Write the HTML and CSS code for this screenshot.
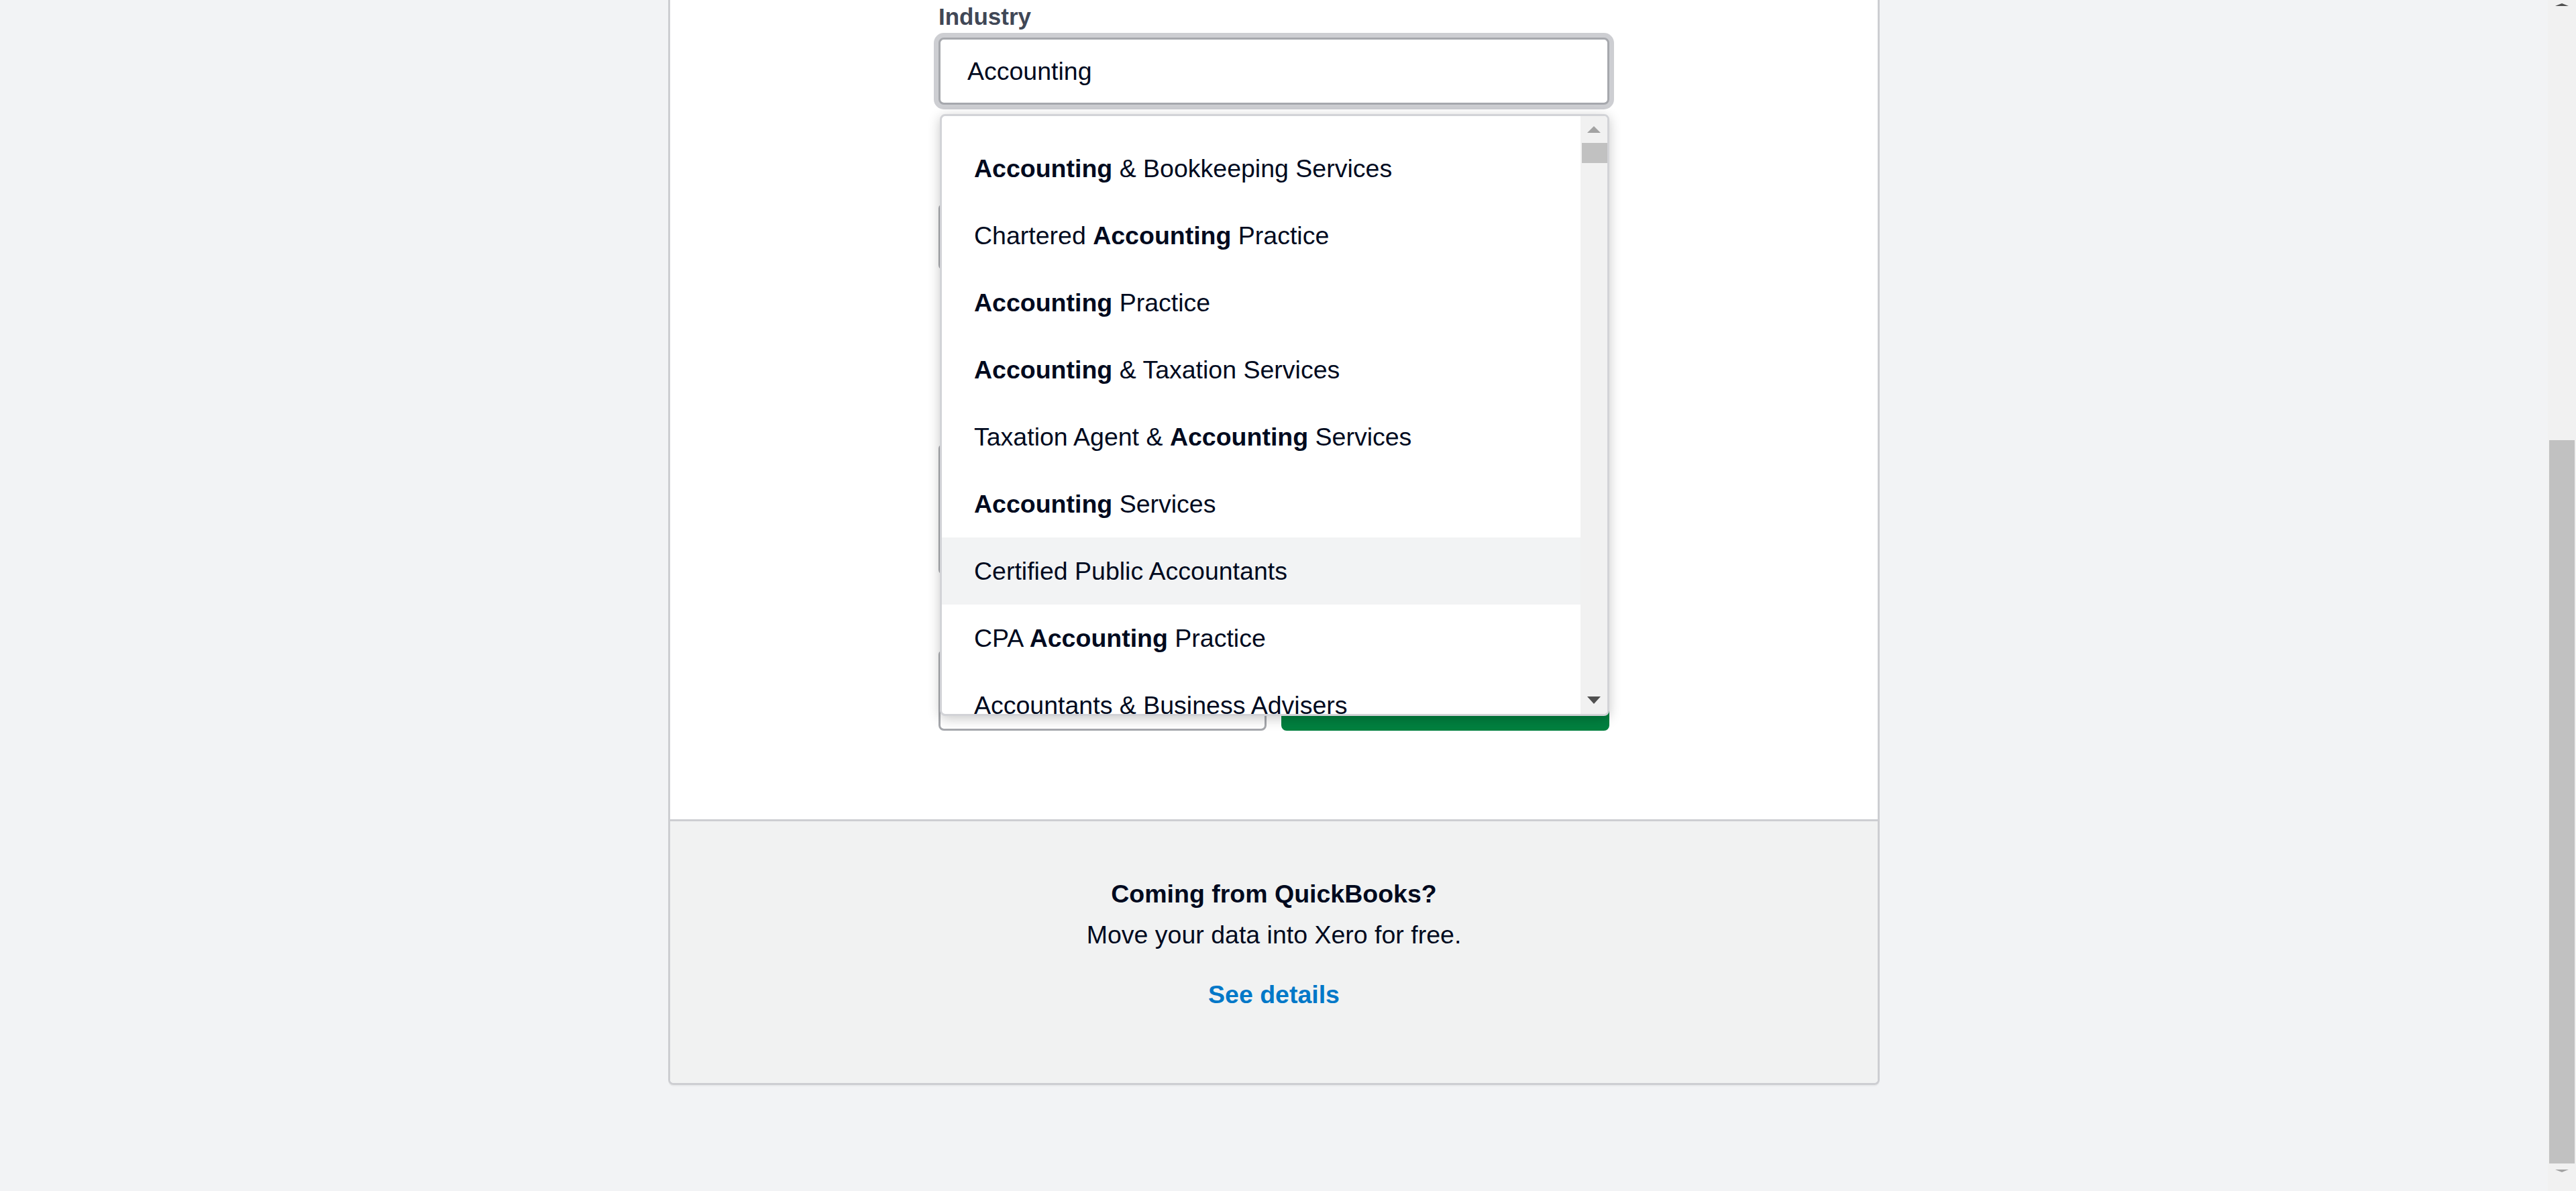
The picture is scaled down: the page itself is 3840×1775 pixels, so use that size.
FILE: index.html
```html
<!DOCTYPE html>
<html lang="en">
<head>
<meta charset="utf-8">
<title>Add organisation</title>
<link rel="stylesheet" href="styles.css">
</head>
<body>
<div class="screen">
  <main class="page">
    <section class="card">
      <div class="card-body">
        <form class="form">
          <div class="field">
            <label class="label" for="industry">Industry</label>
            <div class="combo">
              <input id="industry" class="input input-focus" type="text" value="Accounting">
              <div class="menu">
                <ul class="options">
                  <li class="option"><b>Accounting</b> &amp; Bookkeeping Services</li>
                  <li class="option">Chartered <b>Accounting</b> Practice</li>
                  <li class="option"><b>Accounting</b> Practice</li>
                  <li class="option"><b>Accounting</b> &amp; Taxation Services</li>
                  <li class="option">Taxation Agent &amp; <b>Accounting</b> Services</li>
                  <li class="option"><b>Accounting</b> Services</li>
                  <li class="option option-active">Certified Public Accountants</li>
                  <li class="option">CPA <b>Accounting</b> Practice</li>
                  <li class="option">Accountants &amp; Business Advisers</li>
                </ul>
                <div class="menu-scroll">
                  <span class="arrow-up"></span>
                  <span class="menu-thumb"></span>
                  <span class="menu-scroll-fill"></span>
                  <span class="arrow-down"></span>
                </div>
              </div>
            </div>
          </div>
          <div class="field field-country">
            <span class="label-spacer"></span>
            <div class="input"></div>
          </div>
          <div class="field field-tall">
            <span class="label-spacer"></span>
            <div class="input input-tall"></div>
          </div>
          <div class="actions">
            <button type="button" class="btn btn-secondary" aria-label="Cancel"></button>
            <button type="button" class="btn btn-primary" aria-label="Continue"></button>
          </div>
        </form>
      </div>
      <div class="card-footer">
        <p class="footer-title">Coming from QuickBooks?</p>
        <p class="footer-text">Move your data into Xero for free.</p>
        <a class="footer-link" href="#">See details</a>
      </div>
    </section>
  </main>
  <div class="vscroll">
    <span class="vs-arrow-up"></span>
    <span class="vs-track"></span>
    <span class="vs-thumb"></span>
    <span class="vs-arrow-down"></span>
  </div>
</div>
</body>
</html>
```

FILE: styles.css
```css
* { box-sizing: border-box; }

html, body {
  margin: 0;
  padding: 0;
  height: 100%;
  overflow: hidden;
}

body {
  background: #f2f3f5;
  font-family: "Liberation Sans", Arial, sans-serif;
  color: #000a1e;
}

.screen {
  display: flex;
  height: 1775px;
  width: 3840px;
}

.page {
  flex: 1;
  display: flex;
  justify-content: center;
  align-items: flex-start;
}

.card {
  width: 1806px;
  background: #ffffff;
  border: 3px solid #cdced2;
  border-top: none;
  border-radius: 0 0 8px 8px;
  overflow: hidden;
  box-shadow: 0 2px 0 rgba(0, 0, 0, 0.04);
}

.card-body {
  height: 1221px;
  padding-top: 5px;
}

.form {
  width: 1000px;
  margin: 0 auto;
}

.field {
  display: flex;
  flex-direction: column;
}

.label {
  font-size: 35px;
  line-height: 40px;
  font-weight: 700;
  color: #404756;
  margin-bottom: 11px;
}

.label-spacer {
  display: block;
  height: 40px;
  margin-bottom: 11px;
}

.combo {
  position: relative;
}

.input {
  display: block;
  width: 1000px;
  height: 100px;
  border: 3px solid #a6a8ad;
  border-radius: 8px;
  background: #ffffff;
  font-family: "Liberation Sans", Arial, sans-serif;
  font-size: 37.5px;
  color: #000a1e;
  padding: 0 40px;
  margin: 0;
  outline: none;
}

.input-focus {
  box-shadow: 0 0 0 7px #cdced2;
}

.input-tall {
  height: 196px;
}

.field-country {
  margin-top: 96px;
}

.field-tall {
  margin-top: 207px;
}

.menu {
  position: absolute;
  top: 114px;
  left: 2px;
  right: 0;
  height: 897px;
  display: flex;
  background: #ffffff;
  border: 3px solid #d2d3d7;
  border-radius: 8px;
  box-shadow: 0 4px 18px rgba(0, 0, 0, 0.22);
  overflow: hidden;
  z-index: 5;
}

.options {
  flex: 1;
  list-style: none;
  margin: 0;
  padding: 28px 0 0;
  overflow: hidden;
}

.option {
  height: 100px;
  display: flex;
  align-items: center;
  padding-left: 48px;
  font-size: 37.5px;
  color: #000a1e;
  white-space: pre;
}

.option b {
  font-weight: 700;
}

.option-active {
  background: #f2f3f4;
}

.menu-scroll {
  width: 40px;
  background: #f1f1f1;
  display: flex;
  flex-direction: column;
  align-items: center;
  padding: 15px 0;
}

.arrow-up {
  width: 0;
  height: 0;
  border-left: 10px solid transparent;
  border-right: 10px solid transparent;
  border-bottom: 10px solid #a3a3a3;
}

.arrow-down {
  width: 0;
  height: 0;
  border-left: 10px solid transparent;
  border-right: 10px solid transparent;
  border-top: 11px solid #505050;
}

.menu-thumb {
  align-self: flex-end;
  width: 38px;
  height: 30px;
  margin-top: 15px;
  background: #c1c1c1;
}

.menu-scroll-fill {
  flex: 1;
}

.actions {
  display: flex;
  gap: 22px;
  margin-top: 111px;
}

.btn {
  flex: 1;
  height: 121px;
  border-radius: 8px;
}

.btn-secondary {
  background: #ffffff;
  border: 3px solid #a6a8ad;
}

.btn-primary {
  background: #01803f;
  border: 3px solid #01803f;
}

.card-footer {
  height: 393px;
  border-top: 3px solid #cdced2;
  background: #f1f2f2;
  display: flex;
  flex-direction: column;
  align-items: center;
  padding-top: 78px;
  font-size: 37.5px;
  line-height: 60px;
}

.footer-title {
  margin: 0;
  font-weight: 700;
  color: #000a1e;
}

.footer-text {
  margin: 1px 0 0;
  color: #000a1e;
}

.footer-link {
  margin-top: 29px;
  font-weight: 700;
  color: #0078c8;
  text-decoration: none;
}

.vscroll {
  width: 42px;
  height: 1775px;
  background: #f1f1f1;
  display: flex;
  flex-direction: column;
  align-items: center;
}

.vs-arrow-up {
  margin-top: 5px;
  width: 0;
  height: 0;
  border-left: 10px solid transparent;
  border-right: 10px solid transparent;
  border-bottom: 4px solid #505050;
}

.vs-track {
  height: 647px;
}

.vs-thumb {
  width: 38px;
  height: 1078px;
  background: #c1c1c1;
}

.vs-arrow-down {
  margin-top: 9px;
  width: 0;
  height: 0;
  border-left: 10px solid transparent;
  border-right: 10px solid transparent;
  border-top: 4px solid #a3a3a3;
}
```
